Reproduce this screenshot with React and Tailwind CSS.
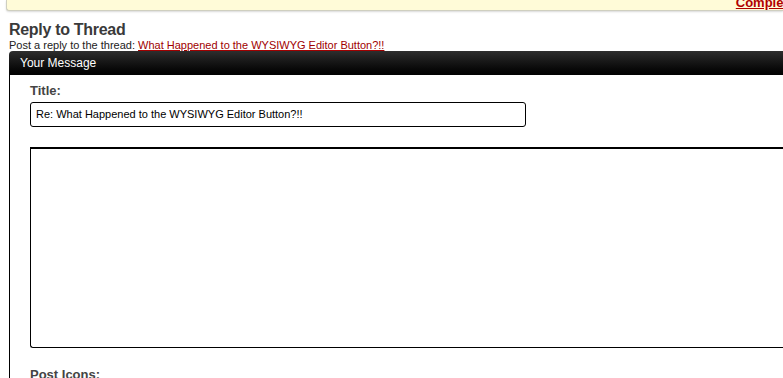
export default function App() {
  return (
    <div className="w-[783px] h-[378px] overflow-hidden bg-white font-['Liberation_Sans',Arial,sans-serif] text-[#3e3e3e]">
      {/* notice box cut at top */}
      <div className="ml-[6px] h-[11px] bg-[#fffbd8] border-l border-b border-[#cfcfc0] rounded-bl-[3px] flex justify-end overflow-hidden shadow-[0_1px_2px_rgba(0,0,0,0.15)]">
        <a className="text-[13px] font-bold text-[#b00000] underline leading-[13px] -mt-[4px] -mr-[12px]">Complete</a>
      </div>

      {/* heading */}
      <div className="pl-[9px] pt-[10px]">
        <h2 className="text-[16px] font-bold leading-[18px] tracking-[-0.3px] text-[#3a3a3a]">Reply to Thread</h2>
        <p className="text-[11px] leading-[12px] text-[#222]">
          Post a reply to the thread:{' '}
          <a className="text-[#a00000] underline">What Happened to the WYSIWYG Editor Button?!!</a>
        </p>
      </div>

      {/* panel */}
      <div className="ml-[9px]">
        <div className="h-[24px] rounded-tl-[4px] bg-gradient-to-b from-[#2e2e2e] to-[#020202] flex items-center pl-[11px]">
          <span className="text-white text-[12px] leading-none">Your Message</span>
        </div>
        <div className="border-l border-black pl-[20px] pt-[8px] h-[330px]">
          <div className="text-[13px] font-bold leading-[16px] text-[#444]">Title:</div>
          <div className="mt-[3px] w-[496px] h-[25px] border border-black rounded-[3px] flex items-center px-[5px] text-[11px] text-black">
            Re: What Happened to the WYSIWYG Editor Button?!!
          </div>
          <div className="mt-[20px] h-[201px] border-t-2 border-l border-b border-black rounded-bl-[3px]"></div>
          <div className="mt-[19px] text-[13px] font-bold leading-[16px] text-[#444]">Post Icons:</div>
        </div>
      </div>
    </div>
  )
}
